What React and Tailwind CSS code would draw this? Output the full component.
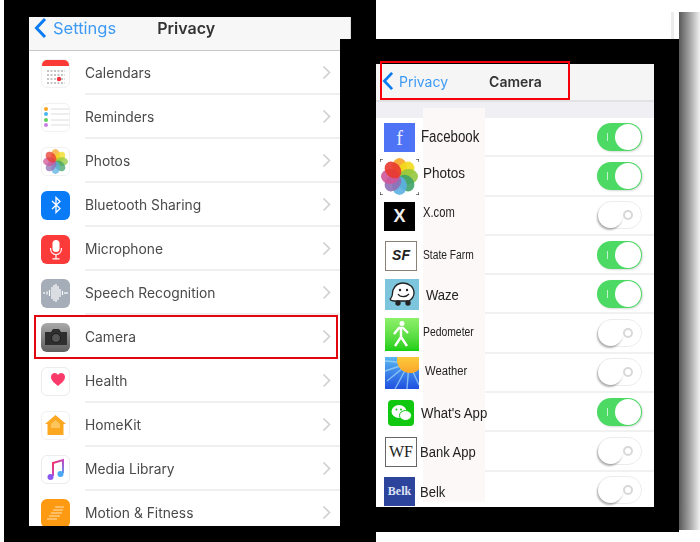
import React from 'react';

const Chevron = ({ className = '' }) => (
  <svg width="9" height="15" viewBox="0 0 9 15" className={className} fill="none">
    <path d="M1.5 1.5 L7.5 7.5 L1.5 13.5" stroke="#d0d0d4" strokeWidth="1.7" />
  </svg>
);

const Back = ({ w = 13, h = 22 }) => (
  <svg width={w} height={h} viewBox="0 0 13 22" fill="none">
    <path d="M11 2 L2.5 11 L11 20" stroke="#0a7bf2" strokeWidth="3" />
  </svg>
);

const Flower = ({ size = 25, opacity = 0.75, rx = 7 }) => {
  const cols = ['#f6a623', '#f2dc1d', '#93c83e', '#3fa368', '#5bb0e3', '#8f6fb5', '#d0559a', '#e8392e'];
  return (
    <svg width={size} height={size} viewBox="0 0 40 40">
      {cols.map((c, i) => (
        <ellipse key={c} cx="20" cy="10" rx={rx} ry="10" fill={c} opacity={opacity} transform={`rotate(${i * 45} 20 20)`} />
      ))}
    </svg>
  );
};

const CalendarIcon = () => (
  <div className="w-[29px] h-[29px] rounded-[6px] bg-white border border-[#f1f1f1] overflow-hidden">
    <div className="h-[6px] bg-[#fb3a36]" />
    <svg width="27" height="21" viewBox="0 0 27 21">
      {[5, 9, 13, 17].map((y) => (
        <path key={y} d={`M5 ${y} H23`} stroke="#8a8a8a" strokeWidth="1.2" strokeDasharray="2 1.5" />
      ))}
      <circle cx="17" cy="13" r="2.2" fill="#f0303a" />
    </svg>
  </div>
);

const RemindersIcon = () => (
  <div className="w-[29px] h-[29px] rounded-[6px] bg-white border border-[#f1f1f1]">
    <svg width="27" height="27" viewBox="0 0 27 27">
      {[['#f6a623', 5], ['#4ab6ef', 10], ['#5ed35e', 16], ['#c77fe0', 21]].map(([c, y]) => (
        <g key={y}>
          <circle cx="4" cy={y} r="2" fill={c} />
          <path d={`M9 ${y} H27`} stroke="#dcdcdc" strokeWidth="1" />
        </g>
      ))}
    </svg>
  </div>
);

const PhotosIcon = () => (
  <div className="w-[29px] h-[29px] rounded-[6px] bg-white border border-[#f1f1f1] flex items-center justify-center">
    <Flower size={25} />
  </div>
);

const BluetoothIcon = () => (
  <div className="w-[29px] h-[29px] rounded-[6px] bg-[#0a7bf7] flex items-center justify-center">
    <svg width="12" height="18" viewBox="0 0 12 18" fill="none">
      <path d="M2 5 L10 12.5 L6 16.5 V1.5 L10 5.5 L2 13" stroke="#fff" strokeWidth="1.3" />
    </svg>
  </div>
);

const MicIcon = () => (
  <div className="w-[29px] h-[29px] rounded-[6px] bg-[#fb3a3a] flex items-center justify-center">
    <svg width="14" height="21" viewBox="0 0 14 21" fill="none">
      <rect x="3.5" y="1" width="7" height="12" rx="3.5" fill="#fff" />
      <path d="M1.5 9 C1.5 13 4 15.5 7 15.5 C10 15.5 12.5 13 12.5 9 M7 15.5 V19.5 M3.5 19.8 H10.5" stroke="#fff" strokeWidth="1.2" />
    </svg>
  </div>
);

const SpeechIcon = () => (
  <div className="w-[29px] h-[29px] rounded-[6px] bg-[#a4adb8] flex items-center justify-center">
    <svg width="25" height="20" viewBox="0 0 25 20" stroke="#fff" strokeWidth="1.2">
      {[[1, 1], [4, 1.5], [6.5, 3], [9, 6], [11, 8], [13, 9], [15, 7], [17, 4], [19.5, 2], [22, 1], [24, 1]].map(([x, h]) => (
        <path key={x} d={`M${x} ${10 - h} V${10 + h}`} />
      ))}
    </svg>
  </div>
);

const CameraIcon = () => (
  <div className="w-[29px] h-[29px] rounded-[6px] bg-gradient-to-b from-[#aaaaaa] to-[#5f5f5f] flex items-center justify-center">
    <svg width="24" height="18" viewBox="0 0 24 18">
      <path d="M1 4 H7 L9 1 H15 L17 4 H23 V17 H1 Z" fill="#2e2e2e" />
      <circle cx="12" cy="10" r="4.5" fill="#555" stroke="#1c1c1c" />
    </svg>
  </div>
);

const HealthIcon = () => (
  <div className="w-[29px] h-[29px] rounded-[6px] bg-white border border-[#ececec] flex justify-center">
    <svg width="16" height="15" viewBox="0 0 16 15" className="mt-[4px] ml-[5px]">
      <path d="M8 14 C3 10 1 8 1 4.8 C1 2.5 3 1 4.8 1 C6.2 1 7.3 1.8 8 3 C8.7 1.8 9.8 1 11.2 1 C13 1 15 2.5 15 4.8 C15 8 13 10 8 14 Z" fill="#fb3a6c" />
    </svg>
  </div>
);

const HomeIcon = () => (
  <div className="w-[29px] h-[29px] rounded-[6px] bg-white border border-[#f1f1f1] flex items-center justify-center">
    <svg width="23" height="22" viewBox="0 0 23 22">
      <path d="M11.5 1 L22 10 H19.5 V21 H3.5 V10 H1 Z" fill="#fba720" />
      <path d="M11.5 6 L16 10 V14 H7 V10 Z" fill="#fdc65c" />
    </svg>
  </div>
);

const MusicIcon = () => (
  <div className="w-[29px] h-[29px] rounded-[6px] bg-white border border-[#ececec] flex items-center justify-center">
    <svg width="18" height="23" viewBox="0 0 18 23" fill="none">
      <defs>
        <linearGradient id="mus" x1="0" y1="0" x2="1" y2="1">
          <stop offset="0" stopColor="#fb2d55" />
          <stop offset="0.55" stopColor="#c04ac8" />
          <stop offset="1" stopColor="#4aa8f5" />
        </linearGradient>
      </defs>
      <path d="M6 18 V5 L16 2 V15" stroke="url(#mus)" strokeWidth="2" />
      <circle cx="3.5" cy="19" r="3" fill="#8a5af0" />
      <circle cx="13.5" cy="16" r="3" fill="#4aa8f5" />
    </svg>
  </div>
);

const MotionIcon = () => (
  <div className="w-[29px] h-[29px] rounded-[6px] bg-[#fd9a12] flex items-center justify-center">
    <svg width="20" height="16" viewBox="0 0 20 16" stroke="#ffe3b5" strokeWidth="1.2">
      <path d="M9 2 H18 M7 5 H17 M5 8 H16 M3 11 H14 M1 14 H11" />
    </svg>
  </div>
);

const privacyRows = [
  ['Calendars', CalendarIcon],
  ['Reminders', RemindersIcon],
  ['Photos', PhotosIcon],
  ['Bluetooth Sharing', BluetoothIcon],
  ['Microphone', MicIcon],
  ['Speech Recognition', SpeechIcon],
  ['Camera', CameraIcon],
  ['Health', HealthIcon],
  ['HomeKit', HomeIcon],
  ['Media Library', MusicIcon],
  ['Motion & Fitness', MotionIcon],
];

const Toggle = ({ on }) =>
  on ? (
    <div className="w-[45px] h-[28px] rounded-full bg-[#4cd964] flex items-center justify-between pl-[10px] pr-[1px] blur-[0.4px] shadow-[1px_1px_2px_rgba(0,0,0,0.15)]">
      <div className="w-px h-[8px] bg-[#c4f2cf]" />
      <div className="w-[26px] h-[26px] rounded-full bg-white" />
    </div>
  ) : (
    <div className="w-[45px] h-[28px] rounded-full bg-white border border-[#ececec] flex items-center justify-between pr-[8px] blur-[0.4px]">
      <div className="w-[25px] h-[25px] rounded-full bg-white shadow-[-1px_2px_2px_rgba(0,0,0,0.3)]" />
      <div className="w-[10px] h-[10px] rounded-full border-2 border-[#d8d8d8]" />
    </div>
  );

const Box = ({ children, className }) => <div className={`flex items-center justify-center shrink-0 ${className}`}>{children}</div>;

const cameraRows = [
  {
    on: true,
    icon: <Box className="w-[31px] h-[29px] ml-[8px] bg-[#4e73f5] text-[#e8ecff] text-[20px] font-['Liberation_Serif',serif]">f</Box>,
    text: <span className="ml-[6px] text-[16px] scale-x-[0.83] origin-left -mt-px">Facebook</span>,
  },
  {
    on: true,
    icon: (
      <Box className="w-[39px] h-[36px] ml-[4px]">
        <svg width="39" height="36" viewBox="0 0 39 36" className="absolute">
          <path d="M0 3 V0 H3 M36 0 H39 V3 M39 33 V36 H36 M3 36 H0 V33" stroke="#111" strokeWidth="1" fill="none" />
        </svg>
        <Flower size={37} opacity={0.9} rx={8} />
      </Box>
    ),
    text: <span className="ml-[4px] text-[15px] scale-x-90 origin-left -mt-[7px]">Photos</span>,
  },
  {
    on: false,
    icon: <Box className="w-[31px] h-[29px] ml-[8px] bg-black text-[#eee] text-[18px] font-black">X</Box>,
    text: <span className="ml-[8px] text-[14px] scale-x-[0.8] origin-left -mt-[7px]">X.com</span>,
  },
  {
    on: true,
    icon: <Box className="w-[32px] h-[30px] ml-[9px] bg-white border border-[#8b8175] text-[#222] text-[14px] font-black italic">SF</Box>,
    text: <span className="ml-[6px] text-[12.5px] scale-x-[0.82] origin-left">State Farm</span>,
  },
  {
    on: true,
    icon: (
      <Box className="w-[34px] h-[31px] ml-[9px] bg-[#7cc5dc]">
        <svg width="28" height="25" viewBox="0 0 28 25" fill="none">
          <path d="M6 19 C3 19 1 17.5 3 16 C5 14 4 12 5 8 C7 3 11 1 15 1 C21 1 26 5 26 11 C26 15 24 17 21 19 Z" fill="#fff" stroke="#222" strokeWidth="1.3" />
          <circle cx="10" cy="21" r="2.7" fill="#222" />
          <circle cx="20" cy="21" r="2.7" fill="#222" />
          <circle cx="12" cy="8" r="1.2" fill="#222" />
          <circle cx="19" cy="8" r="1.2" fill="#222" />
          <path d="M10 12 C12 15.5 18 15.5 21 12" stroke="#222" strokeWidth="1.2" />
        </svg>
      </Box>
    ),
    text: <span className="ml-[7px] text-[15px] scale-x-[0.87] origin-left">Waze</span>,
  },
  {
    on: false,
    icon: (
      <Box className="w-[34px] h-[33px] ml-[9px] bg-gradient-to-b from-[#8df06a] to-[#12cf0f]">
        <svg width="20" height="28" viewBox="0 0 20 28" fill="none" stroke="#fff" strokeWidth="2.4">
          <circle cx="10" cy="3.5" r="2.5" fill="#fff" stroke="none" />
          <path d="M2 14 L7 8 H11 L16 13 M9 8 V17 L3 26 M9 17 L15 26" />
        </svg>
      </Box>
    ),
    text: <span className="ml-[4px] text-[12.5px] scale-x-[0.83] origin-left -mt-[3px]">Pedometer</span>,
  },
  {
    on: false,
    icon: (
      <Box className="w-[34px] h-[32px] ml-[9px]">
        <svg width="34" height="32" viewBox="0 0 34 32">
          <defs>
            <linearGradient id="sky" x1="0" y1="0" x2="0" y2="1">
              <stop offset="0" stopColor="#5ab8f2" />
              <stop offset="1" stopColor="#1f4fe0" />
            </linearGradient>
            <linearGradient id="sun" x1="0" y1="0" x2="0" y2="1">
              <stop offset="0" stopColor="#fde047" />
              <stop offset="1" stopColor="#fba62a" />
            </linearGradient>
          </defs>
          <rect width="34" height="32" fill="url(#sky)" />
          <path d="M24 6 L0 4 M24 6 L0 14 M24 6 L2 24 M24 6 L10 32 M24 6 L22 32 M24 6 L34 28" stroke="#a8dcfa" strokeWidth="1.4" opacity="0.7" />
          <circle cx="25" cy="3" r="13" fill="url(#sun)" />
        </svg>
      </Box>
    ),
    text: <span className="ml-[6px] text-[12.5px] scale-x-90 origin-left -mt-[4px]">Weather</span>,
  },
  {
    on: true,
    icon: (
      <Box className="w-[26px] h-[26px] ml-[12px] rounded-[4px] bg-[#0fc80f]">
        <svg width="21" height="18" viewBox="0 0 21 18" fill="#fff">
          <ellipse cx="8" cy="7.5" rx="7.5" ry="6.5" />
          <ellipse cx="14.5" cy="11.5" rx="6" ry="5" stroke="#0fc80f" />
          <circle cx="5.5" cy="5.5" r="1" fill="#0fc80f" />
          <circle cx="10" cy="5.5" r="1" fill="#0fc80f" />
        </svg>
      </Box>
    ),
    text: <span className="ml-[7px] text-[15.5px] scale-x-[0.85] origin-left whitespace-nowrap">What's App</span>,
  },
  {
    on: false,
    icon: <Box className="w-[32px] h-[30px] ml-[9px] bg-white border border-[#666] text-[#222] text-[16px] font-['Liberation_Serif',serif]">WF</Box>,
    text: <span className="ml-[3px] text-[15.5px] scale-x-[0.84] origin-left whitespace-nowrap">Bank App</span>,
  },
  {
    on: false,
    icon: <Box className="w-[31px] h-[29px] ml-[8px] bg-[#2c449c] text-[#dfe3f5] text-[12px] font-bold font-['Liberation_Serif',serif]">Belk</Box>,
    text: <span className="ml-[5px] text-[15.5px] scale-x-[0.84] origin-left">Belk</span>,
  },
];

export default function App() {
  return (
    <div className="relative w-[700px] h-[542px] overflow-hidden bg-white flex font-['Inter',sans-serif]">
      {/* left phone */}
      <div className="ml-[4px] w-[372px] h-[542px] shrink-0 bg-black pt-[17px] pl-[25px]">
        <div className="w-[322px] h-[509px] bg-white overflow-hidden blur-[0.5px] border-r border-[#d8d8d8]">
          <div className="h-[34px] bg-[#f7f7f7] border-b border-[#c8c8c8] flex items-center pb-[11px]">
            <div className="ml-[5px]"><Back /></div>
            <span className="ml-[6px] text-[16.5px] text-[#3d9af5]">Settings</span>
            <span className="ml-[41px] text-[16px] font-semibold text-[#333]">Privacy</span>
          </div>
          {privacyRows.map(([label, Icon]) => (
            <div key={label} className="relative flex items-center h-[44px]">
              <div className="ml-[12px] shrink-0"><Icon /></div>
              <div className="ml-[15px] flex-1 h-full flex items-center justify-between pr-[19px] border-b-2 border-[#efefef] text-[13.8px] text-[#4a4a4a]">
                <span className="mt-[2px]">{label}</span>
                <Chevron />
              </div>
              {label === 'Camera' && (
                <div className="absolute left-[5px] top-0 w-[304px] h-[44px] border-[2px] border-[#e3060f]" />
              )}
            </div>
          ))}
        </div>
      </div>

      {/* right phone */}
      <div className="relative z-10 -ml-[36px] mt-[39px] w-[339px] h-[493px] shrink-0 bg-black pl-[36px] pt-[25px]">
        <div className="relative w-[278px] h-[443px] bg-white overflow-hidden">
          <div className="h-[38px] bg-[#f5f5f5] border-b-2 border-[#e2e2e2] flex items-center pb-[2px] blur-[0.4px]">
            <div className="ml-[6px]"><Back w={12} h={20} /></div>
            <span className="ml-[5px] text-[14px] text-[#3d9af5]">Privacy</span>
            <span className="ml-[41px] text-[14px] font-semibold text-[#333]">Camera</span>
          </div>
          <div className="h-[16px] bg-[#efeff4]" />
          <div className="absolute left-[47px] top-[44px] w-[62px] h-[394px] bg-[#fbf8f7]" />
          {cameraRows.map((r, i) => (
            <div key={i} className="flex h-[39.3px]">
              <div className="relative z-10 w-[109px] shrink-0 flex items-center font-['Liberation_Sans',sans-serif] text-[#222]">
                {r.icon}
                {r.text}
              </div>
              <div className="flex-1 flex items-center justify-end pr-[12px] border-b-2 border-[#f1f1f1]">
                <Toggle on={r.on} />
              </div>
            </div>
          ))}
        </div>
        <div className="absolute left-[40px] top-[22px] w-[190px] h-[39px] border-[2px] border-[#f5000a]" />
      </div>

      {/* neighbouring window edge and shadow */}
      <div className="relative z-10 mt-[12px] h-[518px] w-[21px] bg-gradient-to-r from-[#5a5a5a] to-[#f2f2f2]" />
      <div className="absolute left-[671px] top-[12px] w-[3px] h-[27px] bg-[#ececec]" />
    </div>
  );
}
